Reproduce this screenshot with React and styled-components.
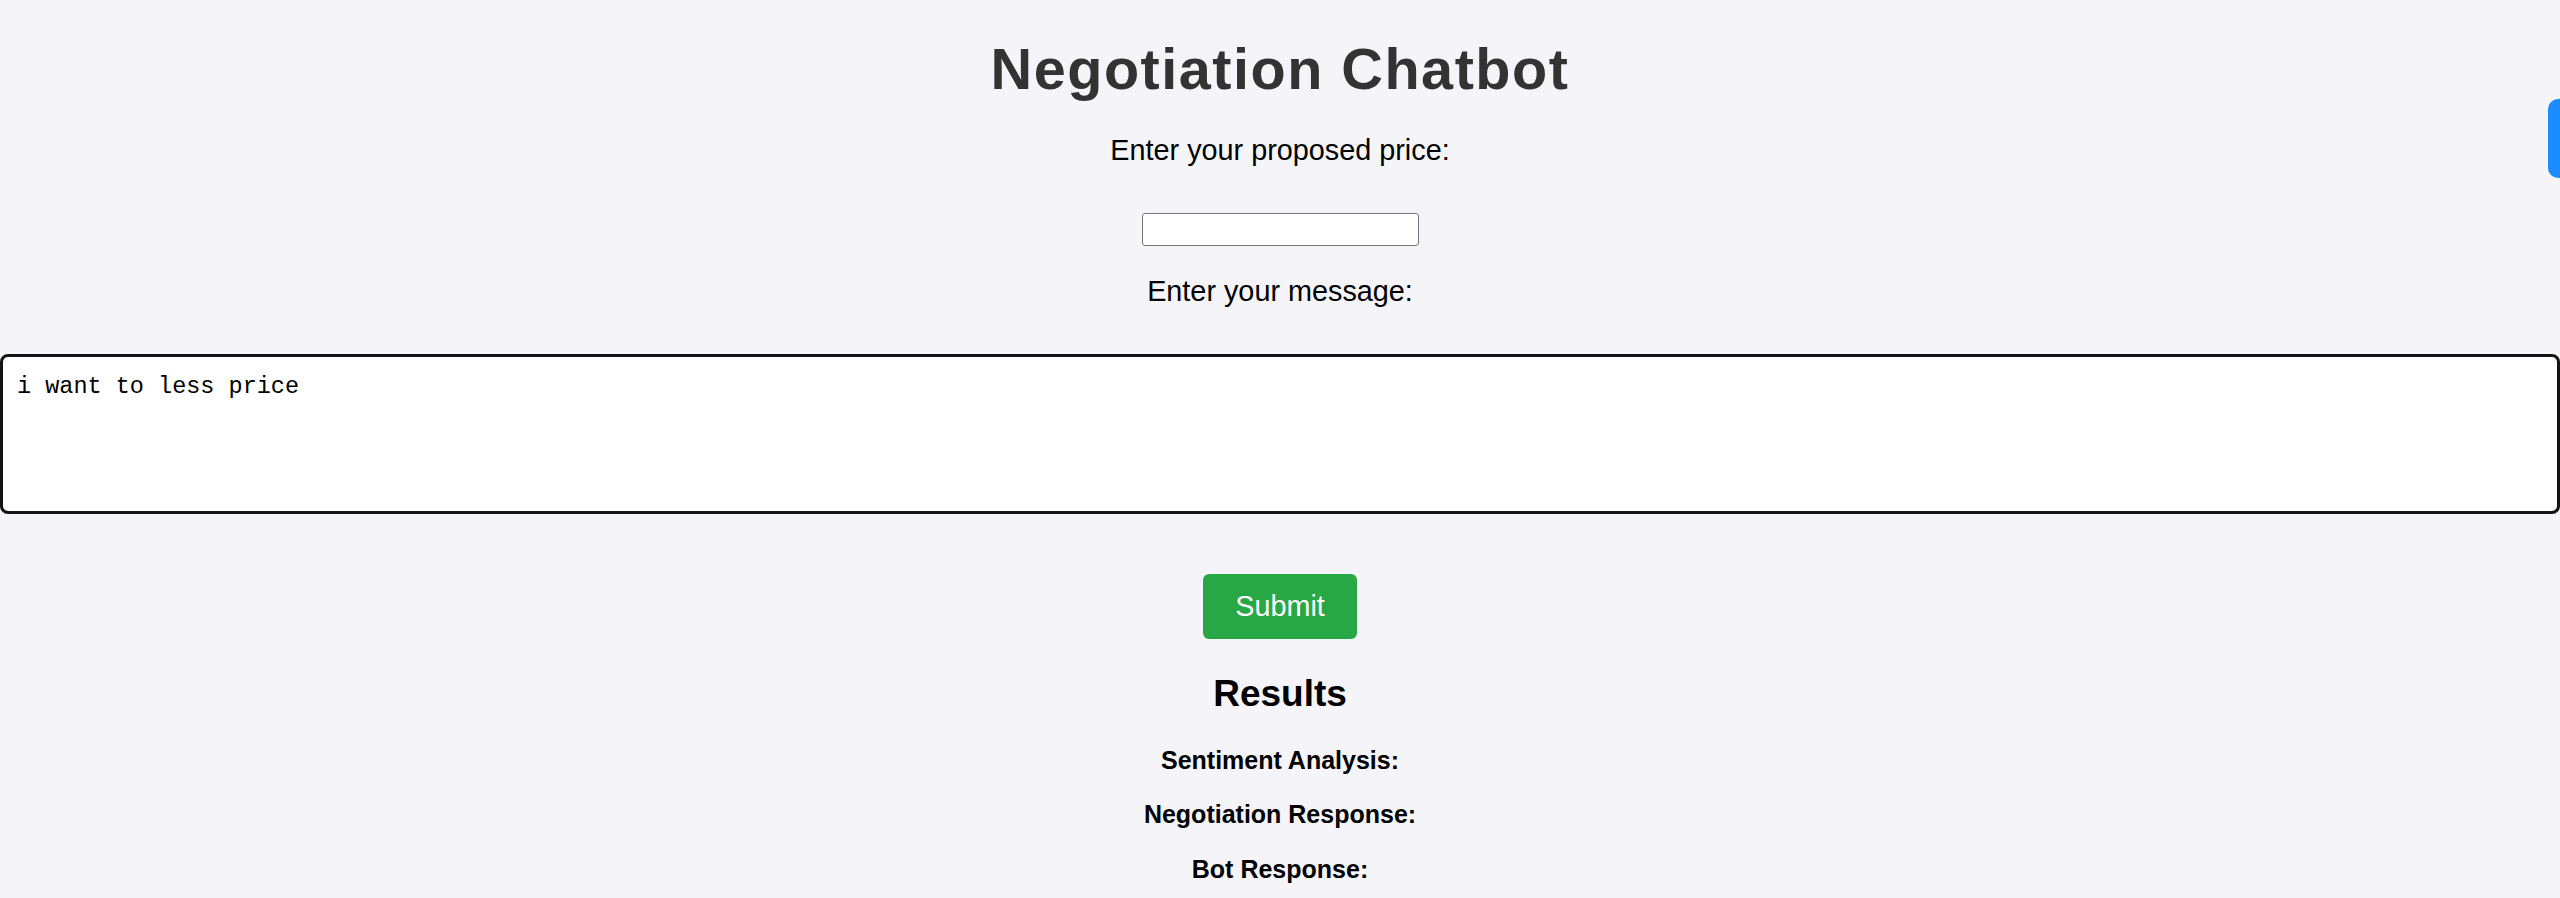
import React from 'react'
import styled, { createGlobalStyle } from 'styled-components'

const GlobalStyle = createGlobalStyle`
    html, body {
        margin: 0;
        padding: 0;
        background-color: #f4f4f9;
        font-family: 'Liberation Sans', Arial, sans-serif;
        color: #000;
    }
`

const Page = styled.div`
    min-height: 898px;
    display: flex;
    flex-direction: column;
    align-items: center;
    text-align: center;
    padding-top: 41px;
    box-sizing: border-box;
`
const Title = styled.h1`
    margin: 0;
    font-size: 57.6px;
    line-height: 1;
    font-weight: 700;
    letter-spacing: 1.5px;
    color: #333;
`
const Label = styled.label`
    display: block;
    margin-top: ${props => props.gap}px;
    font-size: 28.8px;
    line-height: 1;
`
const PriceInput = styled.input`
    margin-top: 49px;
    width: 277px;
    height: 33px;
    box-sizing: border-box;
    border: 1px solid #767676;
    border-radius: 3px;
    background: #fff;
    padding: 2px 4px;
    font-size: 16px;
`
const MessageBox = styled.textarea`
    display: block;
    margin-top: 48px;
    width: 100%;
    height: 160px;
    box-sizing: border-box;
    padding: 16px 14px;
    border: 3px solid #141414;
    border-radius: 8px;
    background: #fff;
    font-family: 'Liberation Mono', 'DejaVu Sans Mono', monospace;
    font-size: 23.5px;
    line-height: 1.15;
    color: #000;
    resize: none;
    outline: none;
`
const SubmitButton = styled.button`
    margin-top: 60px;
    height: 65px;
    padding: 0 32px;
    border: none;
    border-radius: 6px;
    background-color: #28a745;
    color: #fff;
    font-family: 'Liberation Sans', Arial, sans-serif;
    font-size: 28.8px;
    cursor: pointer;
`
const ResultsTitle = styled.h2`
    margin: 36px 0 0;
    font-size: 37px;
    line-height: 1;
    font-weight: 700;
`
const ResultRow = styled.p`
    margin: ${props => props.gap}px 0 0;
    font-size: 25px;
    line-height: 1;
    font-weight: 700;
`
const SideTab = styled.div`
    position: fixed;
    top: 99px;
    right: 0;
    width: 12px;
    height: 79px;
    border-radius: 10px 0 0 10px;
    background-color: #1a8cff;
`

export default function App() {
    return (
        <>
            <GlobalStyle />
            <Page>
                <Title>Negotiation Chatbot</Title>
                <Label gap={37}>Enter your proposed price:</Label>
                <PriceInput type='text' />
                <Label gap={31}>Enter your message:</Label>
                <MessageBox defaultValue='i want to less price' spellCheck={false} />
                <SubmitButton>Submit</SubmitButton>
                <ResultsTitle>Results</ResultsTitle>
                <ResultRow gap={36}>Sentiment Analysis:</ResultRow>
                <ResultRow gap={29}>Negotiation Response:</ResultRow>
                <ResultRow gap={30}>Bot Response:</ResultRow>
            </Page>
            <SideTab />
        </>
    )
}
